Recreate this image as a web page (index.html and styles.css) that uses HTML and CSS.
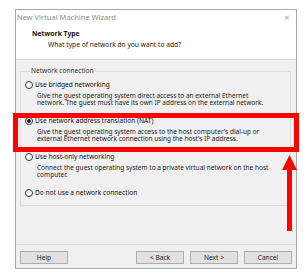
FILE: index.html
```html
<html>

<head>
    <link rel="stylesheet" href="styles.css">
</head>

<body>
    <div class="window">
        <!-- Title bar -->
        <div class="titlebar">
            <span class="title">New Virtual Machine Wizard</span>
            <span class="close">&#x2715;</span>
        </div>

        <!-- Header -->
        <div class="header">
            <h3 class="header-title">Network Type</h3>
            <p class="header-sub">What type of network do you want to add?</p>
        </div>

        <!-- Options -->
        <div class="content">
            <fieldset class="group">
                <legend class="group-label">Network connection</legend>

                <div class="option">
                    <label class="option-label"><span class="radio"></span>Use bridged networking</label>
                    <p class="option-desc">Give the guest operating system direct access to an external Ethernet<br>network. The guest must have its own IP address on the external network.</p>
                </div>

                <div class="option">
                    <label class="option-label"><span class="radio checked"></span>Use network address translation (NAT)</label>
                    <p class="option-desc">Give the guest operating system access to the host computer's dial-up or<br>external Ethernet network connection using the host's IP address.</p>
                </div>

                <div class="option">
                    <label class="option-label"><span class="radio"></span>Use host-only networking</label>
                    <p class="option-desc">Connect the guest operating system to a private virtual network on the host<br>computer.</p>
                </div>

                <div class="option">
                    <label class="option-label"><span class="radio"></span>Do not use a network connection</label>
                </div>
            </fieldset>
        </div>

        <!-- Buttons -->
        <div class="buttons">
            <button class="btn">Help</button>
            <div class="btn-group">
                <button class="btn">&lt; Back</button>
                <button class="btn">Next &gt;</button>
                <button class="btn">Cancel</button>
            </div>
        </div>
    </div>

    <!-- annotation -->
    <div class="highlight"></div>
    <svg class="arrow" width="20" height="80" viewBox="0 0 20 80">
        <polygon points="9.5,1 2,16 17,16" fill="#ff0000" />
        <rect x="7" y="15" width="5" height="62" fill="#ff0000" />
    </svg>
</body>

</html>
```

FILE: styles.css
```css
* {
    margin: 0;
    padding: 0;
    box-sizing: border-box;
    font-family: "Noto Sans", sans-serif;
}

body {
    background: white;
    position: relative;
    width: 308px;
    height: 278px;
    overflow: hidden;
}

.window {
    margin: 9px 0 0 15px;
    width: 282px;
    height: 260px;
    border: 1px solid #a9a9a9;
    background: #f0f0f0;
    display: flex;
    flex-direction: column;
}

.titlebar {
    height: 14px;
    background: white;
    display: flex;
    align-items: center;
    justify-content: space-between;
    padding: 0 6px 0 1px;
    color: #8c8c8c;
    font-size: 7.5px;
}

.close {
    font-size: 7px;
    color: #a0a0a0;
}

.header {
    background: white;
    height: 36px;
    border-bottom: 1px solid #d8d8d8;
    padding: 5px 0 0 16px;
}

.header-title {
    font-size: 6.8px;
    line-height: 9px;
    font-weight: bold;
    color: #111;
}

.header-sub {
    font-size: 6.7px;
    line-height: 9px;
    margin-top: 2px;
    padding-left: 16px;
    color: #222;
}

.content {
    flex: 1;
    padding: 7px 5px 0 4px;
}

.group {
    border: 1px solid #dcdcdc;
    padding: 6px 4px 8px 4px;
}

.group-label {
    font-size: 6.6px;
    line-height: 8px;
    margin-left: 5px;
    padding: 0 1px;
    color: #333;
}

.option {
    margin-bottom: 10.5px;
}

.option:last-child {
    margin-bottom: 0;
}

.option-label {
    display: flex;
    align-items: center;
    font-size: 6.6px;
    line-height: 8px;
    color: #111;
    white-space: nowrap;
}

.radio {
    width: 8px;
    height: 8px;
    border: 1px solid #333;
    border-radius: 50%;
    background: white;
    margin-right: 2px;
    display: flex;
    align-items: center;
    justify-content: center;
}

.radio.checked::after {
    content: "";
    width: 4px;
    height: 4px;
    border-radius: 50%;
    background: #222;
}

.option-desc {
    font-size: 6.5px;
    line-height: 7.5px;
    margin-top: 2.5px;
    padding-left: 12px;
    color: #222;
    white-space: nowrap;
}

.buttons {
    height: 24px;
    border-top: 1px solid #dadada;
    display: flex;
    justify-content: space-between;
    padding: 6px 4px 0 4px;
}

.btn-group {
    display: flex;
    gap: 6px;
}

.btn {
    width: 48px;
    height: 13px;
    background: #e1e1e1;
    border: 1px solid #adadad;
    font-size: 6.6px;
    color: #222;
}

.highlight {
    position: absolute;
    left: 13px;
    top: 113px;
    width: 286px;
    height: 39px;
    border: 5px solid #ff0000;
}

.arrow {
    position: absolute;
    left: 280px;
    top: 154px;
}
```
